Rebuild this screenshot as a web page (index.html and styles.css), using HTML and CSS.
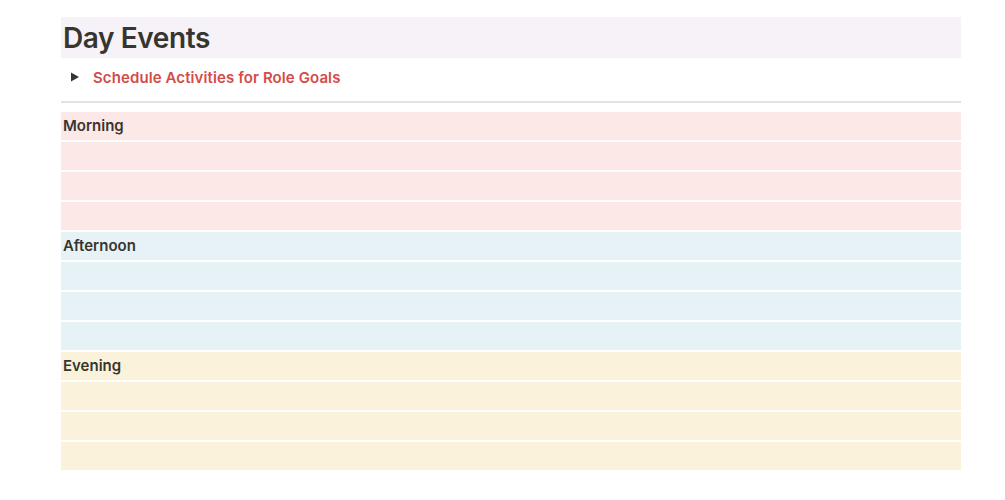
FILE: index.html
```html
<!DOCTYPE html>
<html lang="en">
<head>
    <meta charset="UTF-8">
    <title>Day Events</title>
    <link rel="stylesheet" href="styles.css">
</head>
<body>
    <div class="page">
        <h1 class="page-title">Day Events</h1>

        <div class="toggle">
            <span class="toggle-arrow">
                <svg width="10" height="10" viewBox="0 0 10 10"><path d="M1 0.5 L9 5 L1 9.5 Z" fill="#37352f"/></svg>
            </span>
            <span class="toggle-text">Schedule Activities for Role Goals</span>
        </div>

        <hr class="divider">

        <div class="block morning">
            <div class="row label">Morning</div>
            <div class="row"></div>
            <div class="row"></div>
            <div class="row"></div>
        </div>
        <div class="block afternoon">
            <div class="row label">Afternoon</div>
            <div class="row"></div>
            <div class="row"></div>
            <div class="row"></div>
        </div>
        <div class="block evening">
            <div class="row label">Evening</div>
            <div class="row"></div>
            <div class="row"></div>
            <div class="row"></div>
        </div>
    </div>
</body>
</html>
```

FILE: styles.css
```css
* {
    box-sizing: border-box;
    margin: 0;
    padding: 0;
}

body {
    background: white;
    font-family: Inter, "Liberation Sans", sans-serif;
    color: #37352f;
}

.page {
    width: 900px;
    margin-left: 61px;
    padding-top: 17px;
}

.page-title {
    background: #f6f2f8;
    height: 41px;
    line-height: 43px;
    font-size: 28px;
    font-weight: 600;
    letter-spacing: -0.4px;
    padding-left: 2px;
}

.toggle {
    display: flex;
    align-items: center;
    height: 38px;
    padding-left: 9px;
}

.toggle-arrow {
    display: flex;
    width: 23px;
}

.toggle-text {
    color: #d44c47;
    font-size: 15px;
    font-weight: 600;
    letter-spacing: 0.1px;
}

.divider {
    border: none;
    border-top: 2px solid #e3e2e0;
    margin-top: 5px;
    margin-bottom: 9px;
}

.block {
    display: flex;
    flex-direction: column;
    gap: 2px;
    margin-bottom: 2px;
}

.row {
    height: 28px;
}

.label {
    font-size: 15px;
    font-weight: 600;
    line-height: 27px;
    padding-left: 2px;
}

.morning .row {
    background: #fde8e8;
}

.afternoon .row {
    background: #e7f2f7;
}

.evening .row {
    background: #fbf2db;
}
```
